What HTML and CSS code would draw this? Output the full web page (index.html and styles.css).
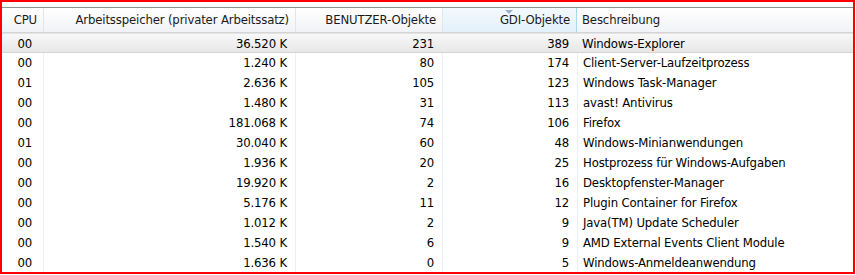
FILE: index.html
```html
<!DOCTYPE html>
<html>
<head>
<meta charset="utf-8">
<link rel="stylesheet" href="styles.css">
</head>
<body>
<div class="frame">
  <div class="grid">
    <div class="row head">
      <div class="cell num cpu">CPU</div>
      <div class="cell num">Arbeitsspeicher (privater Arbeitssatz)</div>
      <div class="cell num">BENUTZER-Objekte</div>
      <div class="cell num hover"><span class="sort"></span>GDI-Objekte</div>
      <div class="cell txt">Beschreibung</div>
    </div>
    <div class="row sel">
      <div class="cell num cpu">00</div><div class="cell num">36.520 K</div><div class="cell num">231</div><div class="cell num">389</div><div class="cell txt">Windows-Explorer</div>
    </div>
    <div class="row">
      <div class="cell num cpu">00</div><div class="cell num">1.240 K</div><div class="cell num">80</div><div class="cell num">174</div><div class="cell txt">Client-Server-Laufzeitprozess</div>
    </div>
    <div class="row">
      <div class="cell num cpu">01</div><div class="cell num">2.636 K</div><div class="cell num">105</div><div class="cell num">123</div><div class="cell txt">Windows Task-Manager</div>
    </div>
    <div class="row">
      <div class="cell num cpu">00</div><div class="cell num">1.480 K</div><div class="cell num">31</div><div class="cell num">113</div><div class="cell txt">avast! Antivirus</div>
    </div>
    <div class="row">
      <div class="cell num cpu">00</div><div class="cell num">181.068 K</div><div class="cell num">74</div><div class="cell num">106</div><div class="cell txt">Firefox</div>
    </div>
    <div class="row">
      <div class="cell num cpu">01</div><div class="cell num">30.040 K</div><div class="cell num">60</div><div class="cell num">48</div><div class="cell txt">Windows-Minianwendungen</div>
    </div>
    <div class="row">
      <div class="cell num cpu">00</div><div class="cell num">1.936 K</div><div class="cell num">20</div><div class="cell num">25</div><div class="cell txt">Hostprozess für Windows-Aufgaben</div>
    </div>
    <div class="row">
      <div class="cell num cpu">00</div><div class="cell num">19.920 K</div><div class="cell num">2</div><div class="cell num">16</div><div class="cell txt">Desktopfenster-Manager</div>
    </div>
    <div class="row">
      <div class="cell num cpu">00</div><div class="cell num">5.176 K</div><div class="cell num">11</div><div class="cell num">12</div><div class="cell txt">Plugin Container for Firefox</div>
    </div>
    <div class="row">
      <div class="cell num cpu">00</div><div class="cell num">1.012 K</div><div class="cell num">2</div><div class="cell num">9</div><div class="cell txt">Java(TM) Update Scheduler</div>
    </div>
    <div class="row">
      <div class="cell num cpu">00</div><div class="cell num">1.540 K</div><div class="cell num">6</div><div class="cell num">9</div><div class="cell txt">AMD External Events Client Module</div>
    </div>
    <div class="row">
      <div class="cell num cpu">00</div><div class="cell num">1.636 K</div><div class="cell num">0</div><div class="cell num">5</div><div class="cell txt">Windows-Anmeldeanwendung</div>
    </div>
  </div>
</div>
</body>
</html>
```
FILE: styles.css
```css
html, body {
  margin: 0;
  padding: 0;
  background: #ffffff;
}
.frame {
  box-sizing: border-box;
  width: 855px;
  height: 274px;
  border: 2px solid #ff0000;
  background: #ffffff;
  overflow: hidden;
  padding-top: 5px;
  font-family: "DejaVu Sans Condensed", "DejaVu Sans", sans-serif;
  font-size: 13px;
  letter-spacing: -0.15px;
  color: #000000;
}
.row {
  display: grid;
  grid-template-columns: 41px 252px 147px 135px 1fr;
  height: 20px;
  line-height: 20px;
}
.cell {
  white-space: nowrap;
  overflow: hidden;
}
.cell + .cell {
  border-left: 1px solid #eaf1fb;
}
.num {
  text-align: right;
  padding-right: 8px;
}
.cpu {
  padding-right: 11px;
}
.txt {
  padding-left: 5px;
}
.head {
  height: 24px;
  line-height: 23px;
  border-top: 1px solid #8f9094;
  border-bottom: 1px solid #d5d5d5;
  background: linear-gradient(#ffffff, #f1f3f6);
  color: #1a1a1a;
}
.head .cell + .cell {
  border-left: 1px solid #e2e5ea;
}
.head .cpu {
  padding-right: 4px;
}
.head .num {
  padding-right: 6px;
}
.head .hover {
  position: relative;
  border-left: 1px solid #a9d6f2;
  border-right: 1px solid #a9d6f2;
  background: linear-gradient(#f3f9fd, #e3f1fb);
}
.head .hover + .cell {
  border-left: none;
}
.sort {
  position: absolute;
  left: 62px;
  top: 2px;
  width: 0;
  height: 0;
  border-left: 4px solid transparent;
  border-right: 4px solid transparent;
  border-top: 4px solid #97b4cc;
}
.sel {
  height: 20px;
  box-sizing: border-box;
  border-top: 1px solid #e3e3e3;
  border-bottom: 1px solid #d4d4d4;
  background: linear-gradient(#f8f8f8, #e7e7e7);
  line-height: 19px;
}
.sel .cell + .cell {
  border-left: none;
}
```
